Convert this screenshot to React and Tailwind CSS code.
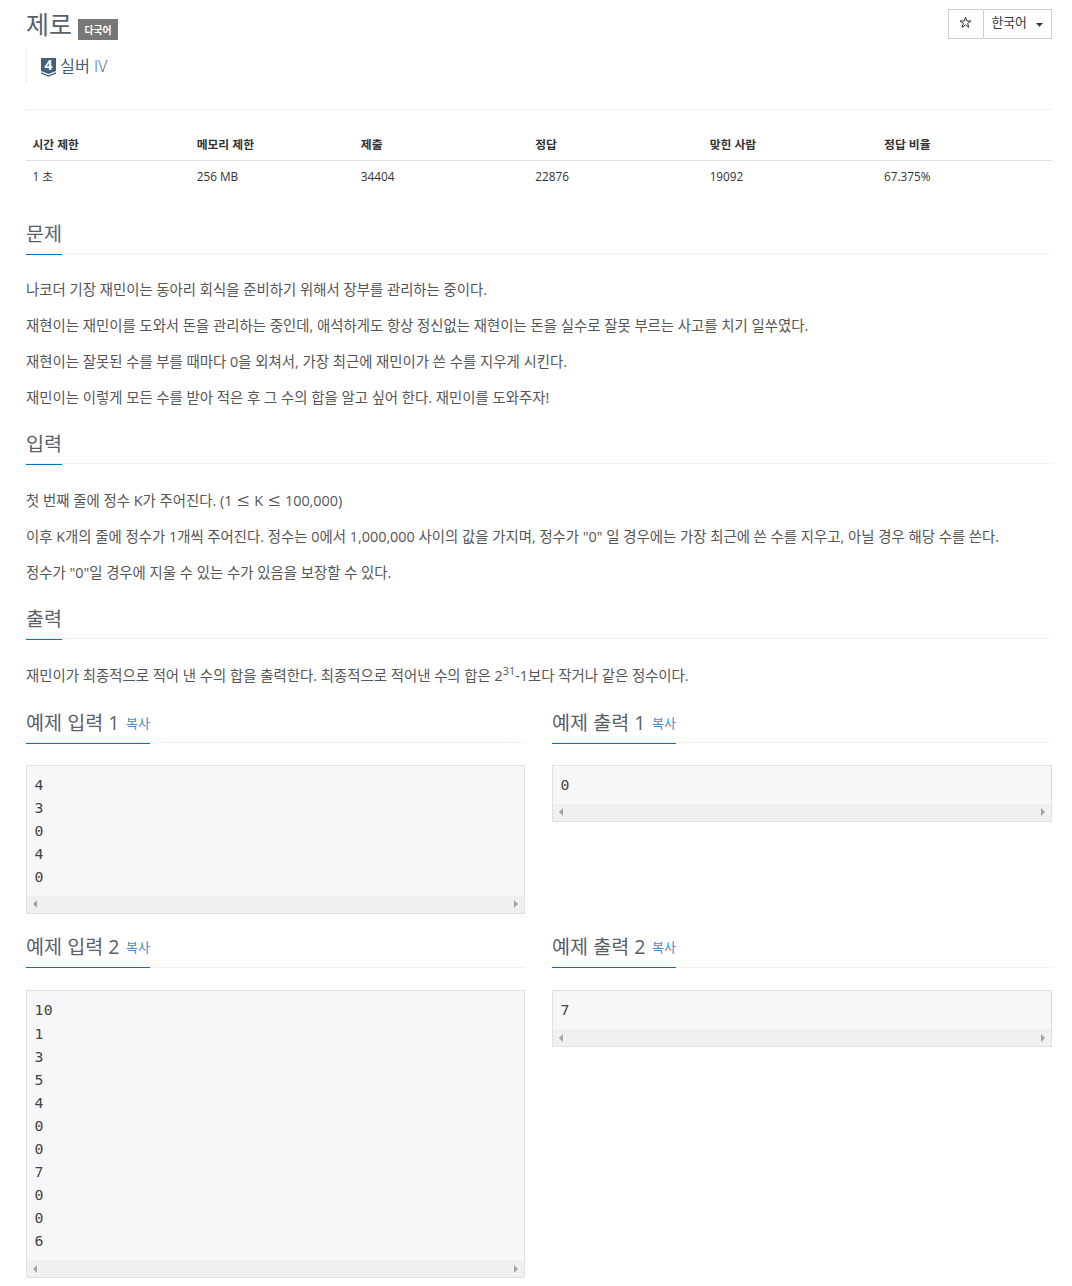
import React from 'react';

const stats = [
  { label: '시간 제한', value: '1 초', width: 'w-[16%]' },
  { label: '메모리 제한', value: '256 MB', width: 'w-[16%]' },
  { label: '제출', value: '34404', width: 'w-[17%]' },
  { label: '정답', value: '22876', width: 'w-[17%]' },
  { label: '맞힌 사람', value: '19092', width: 'w-[17%]' },
  { label: '정답 비율', value: '67.375%', width: 'w-[17%]' },
];

const samples = [
  { id: 1, input: ['4', '3', '0', '4', '0'], output: ['0'] },
  { id: 2, input: ['10', '1', '3', '5', '4', '0', '0', '7', '0', '0', '6'], output: ['7'] },
];

const TierBadge = () => (
  <svg className="w-[15px] h-[19px] overflow-visible" viewBox="0 0 15 19">
    <path d="M0 0h15v13l-7.5 3L0 13z" fill="#435f7a" />
    <path d="M0 14.900l7.500 3.100 7.500-3.100" fill="none" stroke="#435f7a" strokeWidth="1.300" />
    <text x="7.500" y="12" textAnchor="middle" fontFamily="Open Sans" fontWeight="700" fontSize="14" fill="#fff">4</text>
  </svg>
);

const Headline = ({ children, className, overlap = '-mb-[2px]' }) => (
  <div className={`flex items-end border-b border-dotted border-[#e4e9f0] ${className}`}>
    <h2 className={`h-[38px] leading-[34px] border-b border-[#0076c0] text-[19.6px] text-[#585f69] whitespace-nowrap ${overlap}`}>
      {children}
    </h2>
  </div>
);

const Section = ({ title, children, headClass = 'h-[48px] mb-[19px]' }) => (
  <section>
    <Headline className={headClass}>{title}</Headline>
    <div className="text-[14.4px] leading-[36px] text-[#555] whitespace-nowrap">{children}</div>
  </section>
);

// wide form of the sign
const Leq = () => <span className="inline-block w-[14.4px] scale-x-130 text-center text-[17px] leading-none">≤</span>;

const Sample = ({ title, lines, className, overlap }) => (
  <div>
    <Headline className={className} overlap={overlap}>
      {title} <a href="#copy" className="ml-[1.5px] align-[2px] text-[12.9px] leading-none text-[#428bca]">복사</a>
    </Headline>
    <div className="mt-[22px] border border-[#e0e0e5] bg-[#f7f7f9]">
      <pre className="px-[7.5px] pt-[7.5px] pb-[7.500px] text-[14.8px] leading-[23.1px] tracking-[0.4px] text-[#444] font-['DejaVu_Sans_Mono',monospace]">
        {lines.join('\n')}
      </pre>
      <div className="flex items-center justify-between h-[17px] px-[6px] bg-[#f0f0f0]">
        <svg className="w-1 h-2" viewBox="0 0 4 8"><path d="M4 0v8L0 4z" fill="#a3a3a3" /></svg>
        <svg className="w-1 h-2" viewBox="0 0 4 8"><path d="M0 0v8l4-4z" fill="#a3a3a3" /></svg>
      </div>
    </div>
  </div>
);

const App = () => {
  return (
    <div className="h-[1286px] overflow-hidden bg-white pl-[26px] pr-5 text-[#333] font-['Open_Sans','Noto_Sans_CJK_KR',sans-serif]">
      <div className="flex justify-between h-[48px]">
        <div className="flex">
          <h1 className="pt-[4px] text-[25px] leading-[40px] text-[#585f69]">제로</h1>
          <span className="mt-[19px] ml-[6px] w-10 h-[21px] bg-[#777] text-center text-[9.8px] leading-[23px] font-bold text-white">다국어</span>
        </div>
        <div className="flex mt-[9px] h-[30px] border border-[#ccc] text-[12.8px]">
          <button className="flex items-center justify-center w-[35px] border-r border-[#ccc]">
            <svg className="w-[13px] h-[13px] -mt-1 mr-px" viewBox="0 0 13 13">
              <path d="M6.5 1.200L7.800 5h4.100L8.600 7.400l1.300 4-3.400-2.500-3.400 2.500 1.300-4L1.100 5h4.100z" fill="none" stroke="#333" />
            </svg>
          </button>
          <button className="flex items-center w-[67px] pl-[7.5px]">
            <span className="-mt-[2px]">한국어</span>
            <svg className="ml-[9px] mt-[2px] w-[7px] h-[4px]" viewBox="0 0 7 4"><path d="M0 0h7L3.500 3.800z" fill="#333" /></svg>
          </button>
        </div>
      </div>

      <div className="flex h-9 pl-[14px] border-l border-[#eee]">
        <span className="mt-[10px]"><TierBadge /></span>
        <span className="ml-[4px] text-[16.2px] leading-[36px] text-[#435f7a]">실버 <span className="font-light">IV</span></span>
      </div>

      <table className="mt-[25px] w-full table-fixed border-t border-[#eee] text-[11.8px]">
        <thead>
          <tr className="h-[51px] border-b border-[#ddd]">
            {stats.map(s => (
              <th key={s.label} className={`pl-[6.500px] pt-[20px] text-left font-bold ${s.width}`}>{s.label}</th>
            ))}
          </tr>
        </thead>
        <tbody>
          <tr className="h-[32px]">
            {stats.map(s => (<td key={s.label} className="pl-[6.500px]">{s.value}</td>))}
          </tr>
        </tbody>
      </table>

      <div className="mt-[12px]">
        <Section title="문제" headClass="h-[49px] mb-[18px]">
          <p>나코더 기장 재민이는 동아리 회식을 준비하기 위해서 장부를 관리하는 중이다.</p>
          <p>재현이는 재민이를 도와서 돈을 관리하는 중인데, 애석하게도 항상 정신없는 재현이는 돈을 실수로 잘못 부르는 사고를 치기 일쑤였다.</p>
          <p>재현이는 잘못된 수를 부를 때마다 0을 외쳐서, 가장 최근에 재민이가 쓴 수를 지우게 시킨다.</p>
          <p>재민이는 이렇게 모든 수를 받아 적은 후 그 수의 합을 알고 싶어 한다. 재민이를 도와주자!</p>
        </Section>
        <Section title="입력">
          <p className="h-9">첫 번째 줄에 정수 K가 주어진다. (1 <Leq /> K <Leq /> 100,000)</p>
          <p>이후 K개의 줄에 정수가 1개씩 주어진다. 정수는 0에서 1,000,000 사이의 값을 가지며, 정수가 "0" 일 경우에는 가장 최근에 쓴 수를 지우고, 아닐 경우 해당 수를 쓴다.</p>
          <p>정수가 "0"일 경우에 지울 수 있는 수가 있음을 보장할 수 있다.</p>
        </Section>
        <Section title="출력">
          <p className="h-9">재민이가 최종적으로 적어 낸 수의 합을 출력한다. 최종적으로 적어낸 수의 합은 2<sup>31</sup>-1보다 작거나 같은 정수이다.</p>
        </Section>
      </div>

      {samples.map(s => {
        const head = s.id === 1 ? 'h-[49px]' : 'h-[54px]';
        const overlap = s.id === 1 ? '-mb-[2px]' : '-mb-[1px]';
        return (
          <div key={s.id} className="grid grid-cols-[499px_500px] items-start gap-x-[27px]">
            <Sample title={`예제 입력 ${s.id}`} lines={s.input} className={head} overlap={overlap} />
            <Sample title={`예제 출력 ${s.id}`} lines={s.output} className={head} overlap={overlap} />
          </div>
        );
      })}
    </div>
  );
};

export default App;
